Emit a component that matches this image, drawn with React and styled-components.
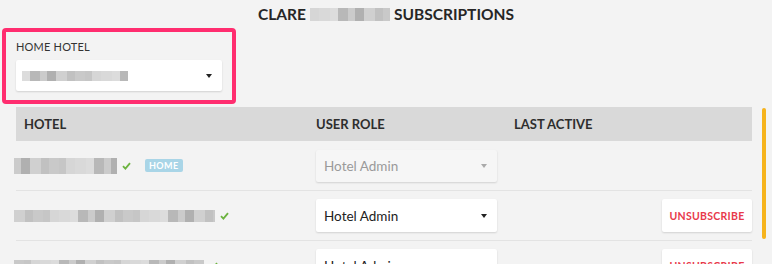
import React from "react";
import styled, { createGlobalStyle } from "styled-components";

const Global = createGlobalStyle`
  html, body { margin: 0; padding: 0; background: #f3f3f3; }
  body { font-family: "Lato", "Open Sans", sans-serif; color: #2b2b2b; }
  * { box-sizing: border-box; }
`;

const Page = styled.div`
  position: relative;
  width: 772px;
  height: 264px;
  overflow: hidden;
  background: #f3f3f3;
`;

const Title = styled.h1`
  margin: 0;
  height: 28px;
  display: flex;
  align-items: center;
  justify-content: center;
  gap: 4px;
  font-size: 15.5px;
  font-weight: 700;
  color: #262626;
`;

const MosaicRow = styled.span`
  display: inline-flex;
  vertical-align: middle;
  margin-left: ${(p) => p.$ml || 0}px;
  height: ${(p) => p.$h}px;
`;

const Cell = styled.span`
  display: block;
  height: 100%;
`;

const shades = ["#cbcbcb", "#c1c1c1", "#d6d6d6", "#b8b8b8", "#d0d0d0", "#c6c6c6", "#dcdcdc", "#b0b0b0", "#c9c9c9", "#d9d9d9"];

function Mosaic({ width, height, seed = 1, ml }) {
  const cells = [];
  let x = 0;
  let s = seed;
  while (x < width) {
    s = (s * 9301 + 49297) % 233280;
    const w = Math.min(7 + (s % 5), width - x);
    cells.push({ w, c: shades[s % shades.length] });
    x += w;
  }
  return (
    <MosaicRow $h={height} $ml={ml}>
      {cells.map((c, i) => (
        <Cell key={i} style={{ width: c.w, background: c.c }} />
      ))}
    </MosaicRow>
  );
}

const Highlight = styled.div`
  margin: 0 0 3px 2px;
  width: 234px;
  height: 76px;
  border: 4px solid #ff2d6f;
  border-radius: 4px;
  padding: 9px 10px 9px 10px;
  display: flex;
  flex-direction: column;
  gap: 7px;
`;

const Label = styled.div`
  font-size: 11px;
  color: #333;
  line-height: 12px;
  letter-spacing: 0.2px;
`;

const SelectBox = styled.div`
  height: ${(p) => p.$h || 33}px;
  width: ${(p) => p.$w}px;
  background: ${(p) => (p.$disabled ? "#f6f6f6" : "#fff")};
  box-shadow: 0 1px 2px rgba(0, 0, 0, 0.14);
  border-radius: 2px;
  display: flex;
  align-items: center;
  justify-content: space-between;
  padding: 0 10px 0 ${(p) => p.$pl || 8}px;
  font-size: 13.5px;
  color: ${(p) => (p.$disabled ? "#9a9a9a" : "#222")};
`;

const Caret = styled.span`
  width: 0;
  height: 0;
  border-left: 3px solid transparent;
  border-right: 3px solid transparent;
  border-top: 4px solid ${(p) => (p.$disabled ? "#aaa" : "#222")};
`;

const TableWrap = styled.div`
  margin-left: 16px;
  width: 736px;
`;

const Grid = styled.div`
  display: grid;
  grid-template-columns: 300px 198px 1fr;
  align-items: center;
`;

const Header = styled(Grid)`
  height: 34px;
  background: #d9d9d9;
  font-size: 13px;
  font-weight: 700;
  color: #2e2e2e;
`;

const HeadCell = styled.div`
  padding-left: ${(p) => p.$pl || 0}px;
`;

const Row = styled(Grid)`
  height: 50px;
  border-bottom: 1px solid #e3e3e3;
`;

const HotelCell = styled.div`
  display: flex;
  align-items: center;
`;

const Check = styled.svg`
  margin-left: 5px;
  flex: none;
`;

const Badge = styled.span`
  margin-left: 14px;
  height: 13px;
  padding: 0 4px;
  background: #a9d5e7;
  color: #fff;
  font-size: 9px;
  font-weight: 700;
  letter-spacing: 0.4px;
  border-radius: 2px;
  display: inline-flex;
  align-items: center;
`;

const ActionCell = styled.div`
  display: flex;
  justify-content: flex-end;
`;

const Unsub = styled.button`
  width: 90px;
  height: 33px;
  border: none;
  background: #fff;
  box-shadow: 0 1px 2px rgba(0, 0, 0, 0.14);
  border-radius: 2px;
  color: #e8394b;
  font-family: inherit;
  font-size: 10.5px;
  font-weight: 700;
  letter-spacing: 0.3px;
  padding: 0;
`;

const Scrollbar = styled.div`
  position: absolute;
  left: 762px;
  top: 108px;
  width: 4px;
  height: 131px;
  border-radius: 2px;
  background: #f6b31c;
`;

const CheckIcon = () => (
  <Check width="9" height="8" viewBox="0 0 9 8">
    <path d="M1 4.2 L3.4 6.6 L8 1.2" fill="none" stroke="#6cb33f" strokeWidth="1.8" />
  </Check>
);

const rows = [
  { w: 103, h: 16, seed: 3, home: true, disabled: true },
  { w: 201, h: 12, seed: 7, home: false, disabled: false },
  { w: 190, h: 12, seed: 11, home: false, disabled: false },
];

export default function App() {
  return (
    <>
      <Global />
      <Page>
        <Title>
          <span>CLARE</span>
          <Mosaic width={80} height={13} seed={5} />
          <span>SUBSCRIPTIONS</span>
        </Title>
        <Highlight>
          <Label>HOME HOTEL</Label>
          <SelectBox $w={206} $pl={6}>
            <Mosaic width={106} height={10} seed={9} />
            <Caret />
          </SelectBox>
        </Highlight>
        <TableWrap>
          <Header>
            <HeadCell $pl={8}>HOTEL</HeadCell>
            <HeadCell>USER ROLE</HeadCell>
            <HeadCell>LAST ACTIVE</HeadCell>
          </Header>
          {rows.map((r, i) => (
            <Row key={i}>
              <HotelCell>
                <Mosaic width={r.w} height={r.h} seed={r.seed} ml={-2} />
                <CheckIcon />
                {r.home && <Badge>HOME</Badge>}
              </HotelCell>
              <SelectBox $w={181} $h={r.disabled ? 32 : 33} $disabled={r.disabled}>
                <span>Hotel Admin</span>
                <Caret $disabled={r.disabled} />
              </SelectBox>
              <ActionCell>{!r.home && <Unsub>UNSUBSCRIBE</Unsub>}</ActionCell>
            </Row>
          ))}
        </TableWrap>
        <Scrollbar />
      </Page>
    </>
  );
}
